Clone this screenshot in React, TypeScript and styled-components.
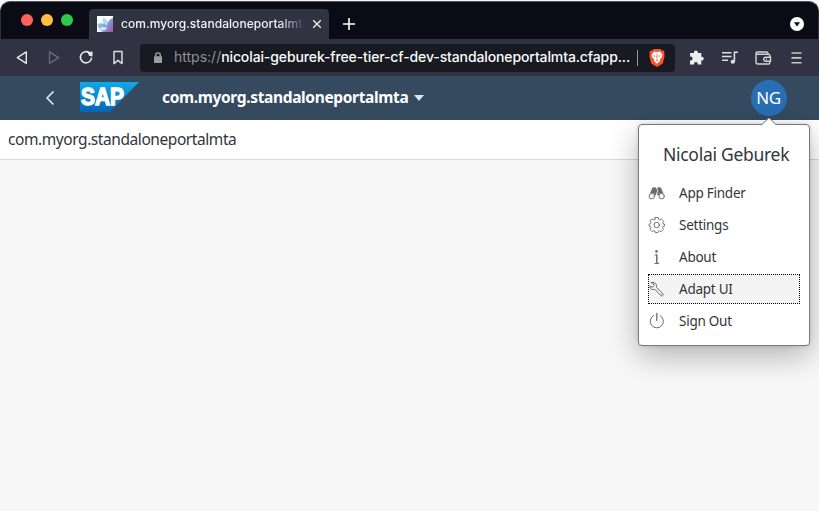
import React from "react";
import styled, { createGlobalStyle, css } from "styled-components";

const GlobalStyle = createGlobalStyle`
  * { box-sizing: border-box; }
  html, body { margin: 0; padding: 0; background: #000; }
  body { overflow: hidden; }
  svg { display: block; flex: none; }
`;

const Window = styled.div`
  position: relative;
  display: flex;
  flex-direction: column;
  width: 819px;
  height: 511px;
  overflow: hidden;
  background: #f7f7f7;
`;

const TabStrip = styled.header`
  display: flex;
  align-items: flex-end;
  height: 38px;
  margin-top: 1px;
  padding-left: 20px;
  padding-right: 14px;
  background: #0b0b15;
  border-top: 1px solid #555557;
  border-left: 1px solid #2f2f38;
  border-right: 1px solid #2f2f38;
  border-radius: 10px 10px 0 0;
`;

const Lights = styled.div`
  display: flex;
  gap: 8px;
  width: 68px;
  padding-bottom: 13px;
`;

const Light = styled.span<{ $color: string }>`
  width: 12px;
  height: 12px;
  border-radius: 50%;
  background: ${(p) => p.$color};
`;

const Tab = styled.div`
  display: flex;
  align-items: center;
  width: 240px;
  height: 30px;
  padding-left: 8px;
  background: #313342;
  border-radius: 4px 4px 0 0;
`;

const TabTitle = styled.span`
  flex: none;
  width: 184px;
  margin-left: 8px;
  overflow: hidden;
  white-space: nowrap;
  font: 500 12px/18px Inter, sans-serif;
  letter-spacing: 0.05px;
  color: #f1f1f4;
  mask-image: linear-gradient(90deg, #000 158px, transparent 184px);
`;

const TabClose = styled.span`
  margin-left: 7px;
`;

const NewTab = styled.span`
  margin: 0 auto 8px 14px;
`;

const TabMenu = styled.span`
  margin-bottom: 8px;
`;

const Toolbar = styled.nav`
  display: flex;
  align-items: center;
  flex: none;
  height: 37px;
  padding-left: 14px;
  background: #313342;
`;

const NavButtons = styled.div`
  display: flex;
  flex: none;
  gap: 16px;
  width: 126px;
`;

const AddressBar = styled.div`
  display: flex;
  flex: none;
  align-items: center;
  width: 535px;
  height: 28px;
  padding-left: 11px;
  background: #181a21;
  border-radius: 4px;
`;

const Url = styled.span`
  flex: none;
  width: 457px;
  margin-left: 9px;
  margin-top: -1px;
  white-space: nowrap;
  font: 400 14px/20px Inter, sans-serif;
  letter-spacing: 0;
  color: #8e9095;
`;

const Host = styled.span`
  font-weight: 500;
  letter-spacing: -0.115px;
  color: #fbfbfc;
`;

const Divider = styled.span`
  width: 1px;
  height: 16px;
  margin: 0 11px 0 6px;
  background: #999ba1;
`;

const ToolbarActions = styled.div`
  display: flex;
  align-items: center;
  gap: 15px;
  margin-left: 13px;
`;

const ShellBar = styled.div`
  display: flex;
  align-items: center;
  flex: none;
  height: 44px;
  padding: 0 32px 0 41px;
  background: #354a5f;
`;

const Logo = styled.span`
  margin: -2px 23px 0 21px;
`;

const sapFont = css`
  font-family: "Noto Sans", sans-serif;
  white-space: nowrap;
`;

const ShellTitle = styled.h1`
  ${sapFont}
  margin: -2px 0 0;
  font-size: 15.5px;
  font-weight: 700;
  line-height: 22px;
  letter-spacing: -0.35px;
  color: #fff;
  width: 247px;
`;

const TitleArrow = styled.span`
  width: 0;
  height: 0;
  margin: 0 auto 0 5px;
  border: 5px solid transparent;
  border-top: 6px solid #d1e8ff;
  border-bottom: 0;
`;

const Avatar = styled.span`
  ${sapFont}
  display: flex;
  align-items: center;
  justify-content: center;
  width: 36px;
  height: 36px;
  padding: 0 1px 2px 0;
  border-radius: 50%;
  background: #286eb4;
  font-size: 17px;
  color: #fff;
  letter-spacing: -0.4px;
`;

const PageHeader = styled.div`
  ${sapFont}
  display: flex;
  align-items: center;
  flex: none;
  height: 40px;
  padding: 0 8px 2px;
  background: #fff;
  border-bottom: 1px solid #d9d9d9;
  font-size: 15.5px;
  letter-spacing: -0.43px;
  color: #32363a;
`;

const Menu = styled.div`
  position: absolute;
  top: 124px;
  left: 638px;
  width: 172px;
  height: 222px;
  padding: 9px;
  background: #fff;
  border: 1px solid #77797c;
  border-radius: 4px;
  box-shadow: 0 10px 30px rgba(0, 0, 0, 0.28), 0 0 4px rgba(0, 0, 0, 0.14);
`;

const MenuArrow = styled.span`
  position: absolute;
  top: -8px;
  right: 31px;
`;

const MenuTitle = styled.div`
  ${sapFont}
  height: 44px;
  padding-left: 15px;
  font-size: 17.5px;
  line-height: 41px;
  letter-spacing: -0.28px;
  color: #32363a;
`;

const MenuItem = styled.div<{ $focused?: boolean }>`
  ${sapFont}
  display: flex;
  align-items: center;
  gap: 13px;
  width: 152px;
  height: 30px;
  margin-bottom: 2px;
  outline: ${(p) => (p.$focused ? "1px dotted #000" : "none")};
  outline-offset: -1px;
  background: ${(p) => (p.$focused ? "#f4f4f4" : "transparent")};
  font-size: 13.5px;
  line-height: 20px;
  letter-spacing: -0.25px;
  color: #32363a;
`;

const Favicon = () => (
  <svg width="16" height="16" viewBox="0 0 16 16">
    <defs>
      <linearGradient id="petal" x1="0" y1="0.2" x2="1" y2="0.8">
        <stop offset="0" stopColor="#8fd3f0" />
        <stop offset="0.5" stopColor="#86a3dc" />
        <stop offset="1" stopColor="#9a5fae" />
      </linearGradient>
    </defs>
    <path fill="#fff" d="M0 0h16v16H0z" />
    <path fill="#a9dff2" d="M6 1.5c4 1 5.5 5 4 9.5C6 9 5 5 6 1.5z" />
    <path fill="url(#petal)" d="M16 2v14H6c-3-1-5-4-5.5-8C4 6.500 7.500 7 10 10c0-4 2.500-7 6-8z" />
    <path fill="#c9e9f5" d="M2 12.500c3-2 6-2 8-.5-1 3-6 3.500-8 .5z" />
  </svg>
);

const MenuIcon = ({ kind }: { kind: string }) => (
  <svg width="18" height="18" viewBox="0 0 18 18" fill="none" stroke="#6a6d70" strokeWidth="1" strokeLinecap="round" strokeLinejoin="round">
    {kind === "finder" && (
      <>
        <path fill="#6a6d70" stroke="none" d="M4.500 3.600l3-.4.7 1v6.900l-1.200.5A3.300 3.300 0 0 0 1.800 9.800zM12.900 3.600l-3-.4-.7 1v6.900l1.200.5a3.300 3.300 0 0 1 5.200-1.800zM7.500 5h2.400v3.500H7.500z" />
        <circle cx="3.800" cy="12.200" r="2.700" fill="#fff" />
        <circle cx="13.600" cy="12.200" r="2.700" fill="#fff" />
      </>
    )}
    {kind === "settings" && (
      <>
        <path d="M7.4 1.3h3.2l.4 2 1.2.5 1.7-1.1 1.6 1.6 1 1-1.2 1.7.4.9 1.5.4v2.4l-1.5.4-.5 1.2 1 1.700-1.700 1.700-.9.900-1.700-1.100-1.200.5-.4 1.500H7.4L7 15.900l-1.200-.5-1.700 1.100-2.400-2.400 1.100-1.700-.5-1.300-1.500-.4V8.300l1.500-.4.5-1.200-1.100-1.700L4 2.700l1.700 1.100L7 3.300z" transform="translate(.4 .3) scale(.93)" />
        <circle cx="8.700" cy="9" r="2.700" />
      </>
    )}
    {kind === "about" && (
      <>
        <circle cx="8.500" cy="3.400" r="1.300" fill="#6a6d70" stroke="none" />
        <path strokeWidth="1.500" d="M8.800 7v8.400" />
        <path d="M7 7h2M6.800 15.400h4" />
      </>
    )}
    {kind === "adapt" && (
      <path d="M3.600 2.500c2.500-.6 4.800.5 5.300 2.700.2.800.1 1.500-.1 2.200l6.400 6c.8.800.4 1.800-.1 2.200-.6.600-1.500.400-2-.1L7.300 9.300c-2.400 1-4.900-.2-5.200-2.900l3 .8 1.400-1.700-.9-2z M13.500 14.200h.2" transform="translate(-.4 0)" />
    )}
    {kind === "signout" && (
      <>
        <path d="M5.500 3.500a6.600 6.600 0 1 0 6.600 0" />
        <path strokeWidth="1.300" d="M8.800 1.500v7" />
      </>
    )}
  </svg>
);

const items = [
  { kind: "finder", label: "App Finder" },
  { kind: "settings", label: "Settings" },
  { kind: "about", label: "About" },
  { kind: "adapt", label: "Adapt UI", focused: true },
  { kind: "signout", label: "Sign Out" },
];

export default function App() {
  return (
    <Window>
      <GlobalStyle />
      <TabStrip>
        <Lights>
          <Light $color="#ff6258" />
          <Light $color="#ffbf40" />
          <Light $color="#2fc94b" />
        </Lights>
        <Tab>
          <Favicon />
          <TabTitle>com.myorg.standaloneportalmta</TabTitle>
          <TabClose>
            <svg width="10" height="10" viewBox="0 0 10 10" stroke="#e9e9ed" strokeWidth="1.4">
              <path d="M1.2 1.2l7.6 7.6M8.8 1.2L1.2 8.8" />
            </svg>
          </TabClose>
        </Tab>
        <NewTab>
          <svg width="12" height="14" viewBox="0 0 12 14" stroke="#fff" strokeWidth="1.6">
            <path d="M6 1v12M0 7h12" />
          </svg>
        </NewTab>
        <TabMenu>
          <svg width="14" height="14" viewBox="0 0 14 14">
            <circle cx="7" cy="7" r="7" fill="#fff" />
            <path d="M4 5.2h6L7 9.4z" fill="#0b0b15" />
          </svg>
        </TabMenu>
      </TabStrip>

      <Toolbar>
        <NavButtons>
          <svg width="16" height="18" viewBox="0 0 16 18" fill="none" stroke="#e8e8ec" strokeWidth="1.4" strokeLinejoin="round">
            <path d="M12.3 2.9v11.4L3.3 8.6z" />
          </svg>
          <svg width="16" height="18" viewBox="0 0 16 18" fill="none" stroke="#686a76" strokeWidth="1.4" strokeLinejoin="round">
            <path d="M3.5 2.9v11.4L12.6 8.6z" />
          </svg>
          <svg width="16" height="18" viewBox="0 0 16 18" fill="none" stroke="#e8e8ec" strokeWidth="1.6" strokeLinecap="round">
            <path d="M11.6 3.9a5.6 5.6 0 1 0 1.9 5.5" />
            <path fill="#e8e8ec" stroke="none" d="M9.5 3.3 14.5 2.5v5l-3.5-.8z" />
          </svg>
          <svg width="16" height="18" viewBox="0 0 16 18" fill="none" stroke="#d9d9de" strokeWidth="1.5" strokeLinejoin="round">
            <path d="M4 2.6h8v12l-4-3.3-4 3.3z" />
          </svg>
        </NavButtons>
        <AddressBar>
          <svg width="14" height="14" viewBox="0 0 14 14">
            <path d="M4.7 6V4.2a2.3 2.3 0 0 1 4.6 0V6" fill="none" stroke="#9b9da5" strokeWidth="1.4" />
            <rect x="3" y="5.2" width="8" height="6.8" rx=".8" fill="#9b9da5" />
          </svg>
          <Url>
            https://<Host>nicolai-geburek-free-tier-cf-dev-standaloneportalmta.cfapp...</Host>
          </Url>
          <Divider />
          <svg width="16" height="18" viewBox="0 0 17 18" preserveAspectRatio="none">
            <path fill="#fb542b" d="M5 0h7l1.7 1.6 1.7-.1 1.3 2-.6 1.8.5 1.7-2 7.5L8.5 18l-6.1-3.5-2-7.5.5-1.7-.6-1.8 1.3-2 1.7.1z" />
            <path fill="#fff" d="M5.4 2.5l3.1.6 3.1-.6 2.6 3-.6 2.7-2.2 2.4.5 1.2-3.4 3-3.4-3 .5-1.2-2.2-2.4-.6-2.7z" />
            <path fill="#fb542b" d="M4.3 6.200l2.600.5-.6 1.300zM12.700 6.200l-2.600.5.6 1.300zM8.200 5h.6l.3 4.200-.6.500-.6-.5zM6.600 11l1.900-.6 1.900.6-1.900 1z" />
          </svg>
        </AddressBar>
        <ToolbarActions>
          <svg width="18" height="18" viewBox="0 0 18 18">
            <path fill="#ececef" d="M2.2 4.5h3.7V4a2 2 0 0 1 4 0v.5h3.4v3.8h.6a1.9 1.9 0 0 1 0 3.8h-.6V16H9.7v-.7a1.8 1.8 0 0 0-3.6 0v.7H2v-4h.7a1.9 1.9 0 0 0 0-3.8H2z" transform="translate(0 -.6)" />
          </svg>
          <svg width="18" height="18" viewBox="0 0 18 18" fill="none" stroke="#dedee3" strokeWidth="1.6">
            <path d="M1 3.7h9.5M1 7.5h9.5M1 11.3h6M13.4 12.3V3.2H17" />
            <ellipse cx="11.8" cy="12.7" rx="2.2" ry="2" fill="#dedee3" stroke="none" />
          </svg>
          <svg width="18" height="18" viewBox="0 0 18 18" fill="none" stroke="#d3d3d8" strokeWidth="1.4">
            <path d="M2 5.2V13a2 2 0 0 0 2 2h10.5c.8 0 1.3-.5 1.3-1.3V6.5c0-.8-.5-1.3-1.3-1.3H3.4C1.5 5.2 1.5 3 3.4 3h9.4c.6 0 1 .4 1 1v1" />
            <path d="M16.5 8.2h-4.7a2 2 0 0 0 0 4h4.7z" fill="#313342" />
            <path d="M12 10.2h1" />
          </svg>
          <svg width="18" height="18" viewBox="0 0 18 18" stroke="#c9c9cf" strokeWidth="1.6">
            <path d="M4.500 4h10M4.500 8.900h10M4.500 13.800h10" />
          </svg>
        </ToolbarActions>
      </Toolbar>

      <ShellBar>
        <svg width="18" height="18" viewBox="0 0 18 18" fill="none" stroke="#d1e8ff" strokeWidth="1.7">
          <path d="M12.4 2.5L6.1 9l6.3 6.5" />
        </svg>
        <Logo>
          <svg width="59" height="30" viewBox="0 0 59 30">
            <defs>
              <linearGradient id="sapBlue" x1="0" y1="0" x2="0" y2="1">
                <stop offset="0" stopColor="#10aae8" />
                <stop offset="1" stopColor="#0863b5" />
              </linearGradient>
            </defs>
            <path d="M0 0h59L30 30H0z" fill="url(#sapBlue)" />
            <text x="1" y="23.4" textLength="43" lengthAdjust="spacingAndGlyphs" fill="#fff" stroke="#fff" strokeWidth="1.4" fontFamily="Liberation Sans, sans-serif" fontWeight="700" fontSize="23.5">SAP</text>
          </svg>
        </Logo>
        <ShellTitle>com.myorg.standaloneportalmta</ShellTitle>
        <TitleArrow />
        <Avatar>NG</Avatar>
      </ShellBar>

      <PageHeader>com.myorg.standaloneportalmta</PageHeader>

      <Menu>
        <MenuArrow>
          <svg width="18" height="9" viewBox="0 0 18 9">
            <path d="M1 8.5L9 .8l8 7.7" fill="#fff" stroke="#77797c" strokeWidth="1" />
            <path d="M1.5 8h15v1h-15z" fill="#fff" />
          </svg>
        </MenuArrow>
        <MenuTitle>Nicolai Geburek</MenuTitle>
        {items.map((item) => (
          <MenuItem key={item.kind} $focused={item.focused}>
            <MenuIcon kind={item.kind} />
            {item.label}
          </MenuItem>
        ))}
      </Menu>
    </Window>
  );
}
